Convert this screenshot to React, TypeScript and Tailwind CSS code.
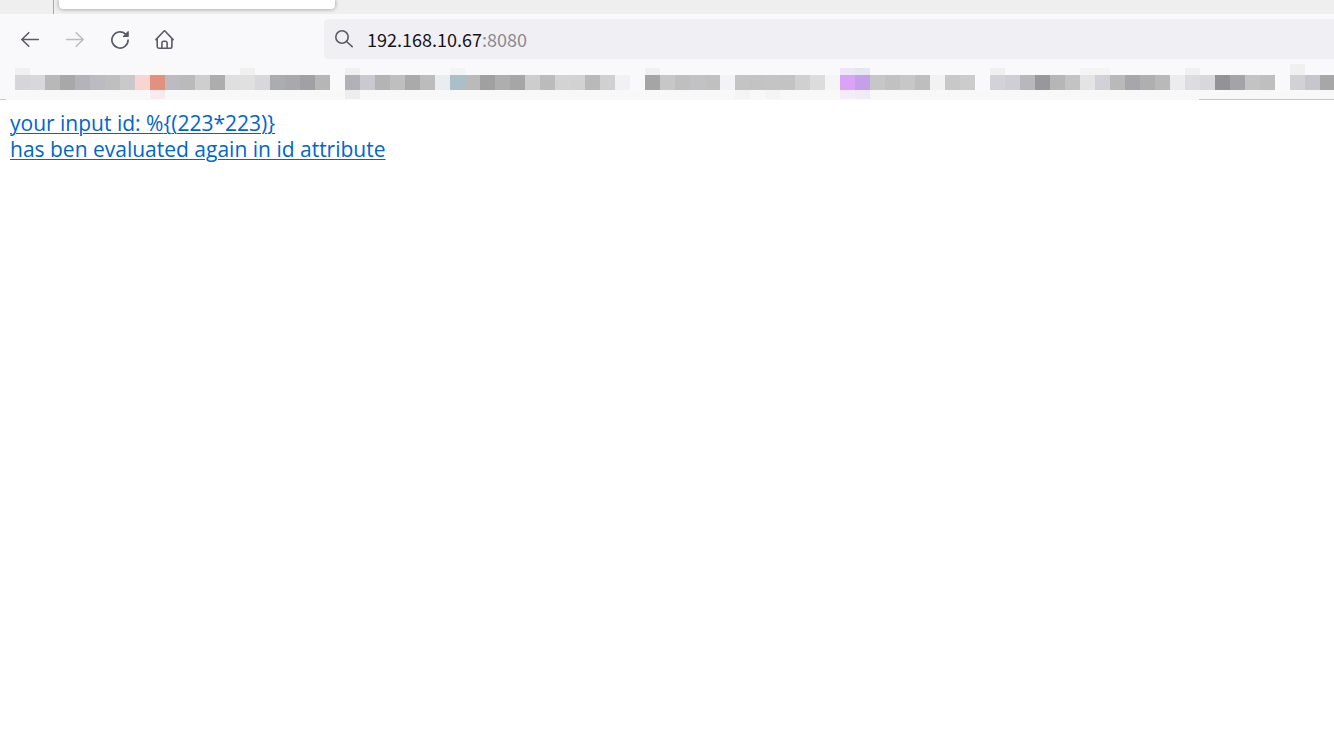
import React from "react";

type Swatch = {
  body?: string;
  above?: string;
  below?: string;
  tall?: boolean;
};

const swatches: Swatch[] = [
  { body: "bg-[#d5d5da]", above: "bg-[#f0f0f1]" },
  { body: "bg-[#d7d7dc]" },
  { body: "bg-[#b8b8b9]" },
  { body: "bg-[#a8a8a9]" },
  { body: "bg-[#b4b3b9]" },
  { body: "bg-[#bcbbc1]" },
  { body: "bg-[#bfbfc0]" },
  { body: "bg-[#c9c9ca]" },
  { body: "bg-[#f8d5d1]" },
  { body: "bg-[#e2917f]", above: "bg-[#fbf9f4]", below: "bg-[#f7eaf0]" },
  { body: "bg-[#bbbbc0]" },
  { body: "bg-[#bababb]" },
  { body: "bg-[#cececf]" },
  { body: "bg-[#adadae]" },
  { body: "bg-[#dfdfe0]" },
  { body: "bg-[#e0e0e1]", above: "bg-[#f0f0f1]" },
  { body: "bg-[#d7d7dc]" },
  { body: "bg-[#abacad]" },
  { body: "bg-[#a9a9ad]" },
  { body: "bg-[#a1a0a5]" },
  { body: "bg-[#b6b6b7]" },
  {},
  { body: "bg-[#b2b1b8]", above: "bg-[#f0f0f1]", below: "bg-[#ededee]" },
  { body: "bg-[#cac9cf]" },
  { body: "bg-[#b4b4b5]" },
  { body: "bg-[#bfbfc0]" },
  { body: "bg-[#aaaaab]" },
  { body: "bg-[#bcbcbd]" },
  { body: "bg-[#e9edf0]" },
  { body: "bg-[#aabfca]", above: "bg-[#f3f4f6]" },
  { body: "bg-[#bababb]" },
  { body: "bg-[#a0a0a1]" },
  { body: "bg-[#aeaeaf]" },
  { body: "bg-[#a6a6a7]" },
  { body: "bg-[#cdcdce]" },
  { body: "bg-[#bbbbbc]" },
  { body: "bg-[#d3d3d4]" },
  { body: "bg-[#d2d2d3]" },
  { body: "bg-[#b9b9ba]" },
  { body: "bg-[#d0d0d1]" },
  { body: "bg-[#f1f1f3]" },
  {},
  { body: "bg-[#a5a5a6]", above: "bg-[#f0f0f1]" },
  { body: "bg-[#c7c7c8]" },
  { body: "bg-[#bfbfc0]" },
  { body: "bg-[#c2c2c4]" },
  { body: "bg-[#c0c0c1]" },
  { body: "bg-[#f3f3f5]" },
  { body: "bg-[#c4c4c5]", below: "bg-[#f4f4f4]" },
  { body: "bg-[#c3c3c4]" },
  { body: "bg-[#c4c4c5]", below: "bg-[#f4f4f4]" },
  { body: "bg-[#c3c3c4]" },
  { body: "bg-[#d0d0d1]" },
  { body: "bg-[#dcdcdd]" },
  { body: "bg-[#f5f5f6]" },
  { body: "bg-[#dba3f7]", above: "bg-[#ece6f7]", below: "bg-[#f4edf9]" },
  { body: "bg-[#c49fea]", above: "bg-[#e6e6f3]", below: "bg-[#f2ebf7]" },
  { body: "bg-[#c7c7c8]" },
  { body: "bg-[#c1c1c2]" },
  { body: "bg-[#c7c7c8]" },
  { body: "bg-[#bebebf]" },
  { body: "bg-[#f2f2f3]" },
  { body: "bg-[#c8c8c9]" },
  { body: "bg-[#cccccd]" },
  {},
  { body: "bg-[#d3d2d8]", above: "bg-[#f0f0f1]" },
  { body: "bg-[#cfced4]" },
  { body: "bg-[#b8b7bc]" },
  { body: "bg-[#98979b]" },
  { body: "bg-[#b6b6b7]" },
  { body: "bg-[#c3c3c4]" },
  { body: "bg-[#e4e4e5]", above: "bg-[#f4f4f5]" },
  { body: "bg-[#d2d1d7]", above: "bg-[#f4f4f5]" },
  { body: "bg-[#b9b9ba]" },
  { body: "bg-[#a7a6ab]" },
  { body: "bg-[#afafb0]" },
  { body: "bg-[#b9b9ba]" },
  { body: "bg-[#ececee]" },
  { body: "bg-[#dddce1]", above: "bg-[#f0f0f2]" },
  { body: "bg-[#d8d7dc]" },
  { body: "bg-[#939297]" },
  { body: "bg-[#a4a3a8]" },
  { body: "bg-[#c3c3c4]" },
  { body: "bg-[#bfbfc0]" },
  {},
  { body: "bg-[#d2d1d6]", above: "bg-[#f0f0f1]", tall: true },
  { body: "bg-[#c7c6cc]" },
  { body: "bg-[#a7a7a8]" },
];

const BackIcon = () => (
  <svg
    width="20"
    height="20"
    viewBox="0 0 20 20"
    fill="none"
    stroke="currentColor"
    strokeWidth="1.6"
    strokeLinecap="round"
    strokeLinejoin="round"
  >
    <path d="M18.3 10.5H1.8M8.8 3.7L1.8 10.5l7 6.8" />
  </svg>
);

const ForwardIcon = () => (
  <svg
    width="20"
    height="20"
    viewBox="0 0 20 20"
    fill="none"
    stroke="currentColor"
    strokeWidth="1.6"
    strokeLinecap="round"
    strokeLinejoin="round"
  >
    <path d="M1.7 10.5h16.5M11.2 3.7l7 6.8-7 6.8" />
  </svg>
);

const ReloadIcon = () => (
  <svg width="20" height="20" viewBox="0 0 20 20" fill="none">
    <path
      d="M18.1 11a8.1 8.1 0 1 1-2.7-6.1"
      stroke="currentColor"
      strokeWidth="1.7"
      strokeLinecap="round"
    />
    <path
      d="M18.8 2.7v4.7a.6.6 0 0 1-.6.6h-4.7c-.5 0-.8-.6-.4-1l4.7-4.7c.4-.4 1-.1 1 .4z"
      fill="currentColor"
    />
  </svg>
);

const HomeIcon = () => (
  <svg
    width="20"
    height="20"
    viewBox="0 0 20 20"
    fill="none"
    stroke="currentColor"
    strokeWidth="1.6"
    strokeLinecap="round"
    strokeLinejoin="round"
  >
    <path d="M.9 10.6L8.8 2.2a1 1 0 0 1 1.4 0l7.9 8.4M2.2 9.3v8.2a1.7 1.7 0 0 0 1.7 1.7h11.3a1.7 1.7 0 0 0 1.7-1.7V9.3" />
    <path d="M6.9 19v-5.1a1.7 1.7 0 0 1 1.7-1.7h1.8a1.7 1.7 0 0 1 1.7 1.7V19" />
  </svg>
);

const SearchIcon = () => (
  <svg
    width="20"
    height="20"
    viewBox="0 0 20 20"
    fill="none"
    stroke="currentColor"
    strokeWidth="1.6"
    strokeLinecap="round"
  >
    <circle cx="8" cy="8" r="6.2" />
    <path d="M12.5 12.5l5.7 5.2" />
  </svg>
);

const TabStrip = () => (
  <div className="flex h-3.5 items-start bg-[#efefef]">
    <div className="h-full w-[54px] border-r border-[#a9a9ab]" />
    <div className="ml-[5px] h-[9px] w-[276px] rounded-b bg-white shadow-[0_0_4px_rgba(0,0,0,0.4)]" />
  </div>
);

const Toolbar = () => (
  <div className="flex items-center py-[5px] pl-5 text-[#5b5b66]">
    <div className="flex gap-[25px]">
      <button type="button" aria-label="Back">
        <BackIcon />
      </button>
      <button type="button" aria-label="Forward" className="text-[#bdbdc1]" disabled>
        <ForwardIcon />
      </button>
      <button type="button" aria-label="Reload">
        <ReloadIcon />
      </button>
      <button type="button" aria-label="Home">
        <HomeIcon />
      </button>
    </div>
    <label className="ml-[149px] flex h-10 flex-1 items-center rounded-l bg-[#f0f0f4] pl-2.5 font-['Noto_Sans_CJK_SC',sans-serif] text-lg leading-6">
      <SearchIcon />
      <input
        type="text"
        aria-label="Address"
        defaultValue="192.168.10.67"
        className="ml-[13px] field-sizing-content text-[#15141a] focus:outline-none"
      />
      <span className="text-[#8a8a8f]">:8080</span>
    </label>
  </div>
);

const BookmarksBar = () => (
  <div className="flex overflow-hidden pl-[15px]">
    {swatches.map((swatch, index) => (
      <div key={index} className="flex w-[15px] shrink-0 flex-col">
        <div className="flex h-[11px] items-end">
          <div
            className={`w-full ${swatch.tall ? "h-full" : "h-[7px]"} ${swatch.above ?? ""}`}
          />
        </div>
        <div className={`h-[15px] ${swatch.body ?? ""}`} />
        <div className={`h-[9px] ${swatch.below ?? "bg-[#f8f8f8]"}`} />
      </div>
    ))}
  </div>
);

export default function App() {
  return (
    <div className="min-h-screen bg-white font-['Open_Sans','Noto_Sans',sans-serif]">
      <header className="bg-[#f9f9fb]">
        <TabStrip />
        <Toolbar />
        <BookmarksBar />
        <div className="flex h-px justify-between bg-[#f8f8f8]">
          <div className="w-1.5 bg-[#c8c8c8]" />
          <div className="w-[135px] bg-[#c8c8c8]" />
        </div>
      </header>
      <main className="px-2.5 py-2.5 text-[21px] leading-[26px]">
        <a
          href="#"
          className="text-[#0066cc] underline decoration-1 underline-offset-2"
        >
          your input id: %{"{"}(223*223){"}"}
          <br />
          has ben evaluated again in id attribute
        </a>
      </main>
    </div>
  );
}
